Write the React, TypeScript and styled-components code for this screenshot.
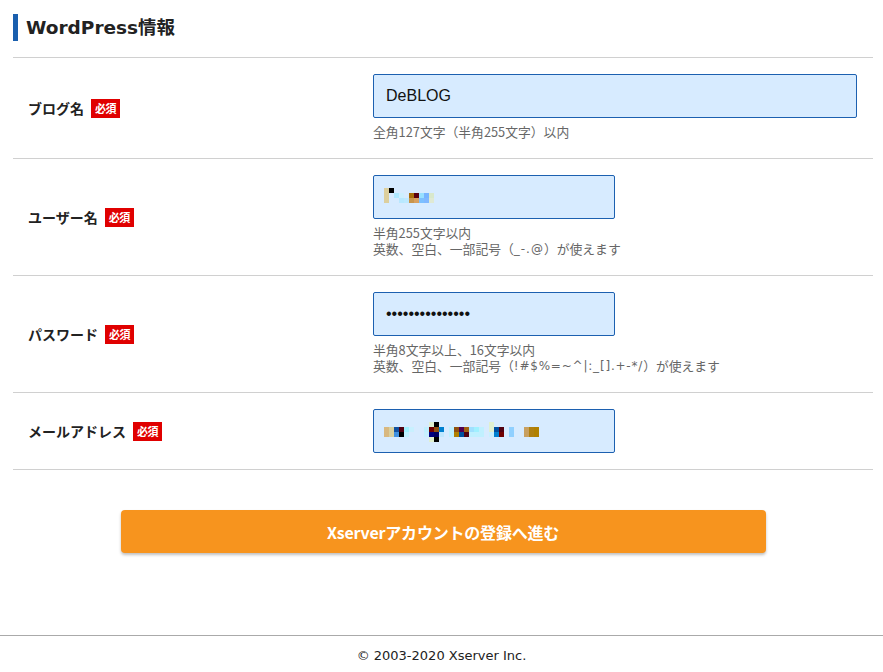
import React from "react";
import styled, { createGlobalStyle, css } from "styled-components";

const Global = createGlobalStyle`
  html, body { margin: 0; padding: 0; background: #fff; }
  body { font-family: "Noto Sans CJK JP", "Noto Sans", sans-serif; color: #222; }
`;

const Page = styled.div`
  display: flex;
  flex-direction: column;
  min-height: 672px;
`;

const Container = styled.div`
  width: 860px;
  margin-left: 13px;
  flex: 1;
`;

const Heading = styled.h2`
  margin: 14px 0 16px;
  border-left: 5px solid #1a5fae;
  padding-left: 8px;
  height: 27px;
  line-height: 27px;
  font-family: "DejaVu Sans", "Noto Sans CJK JP", sans-serif;
  font-weight: bold;
  font-size: 18.5px;
  color: #222;
`;

const Table = styled.div`
  border-top: 1px solid #d0d0d0;
`;

const Row = styled.div`
  display: grid;
  grid-template-columns: 360px 1fr;
  border-bottom: 1px solid #d0d0d0;
`;

const LabelCell = styled.div`
  display: flex;
  align-items: center;
  gap: 7px;
  padding-left: 15px;
`;

const Label = styled.span`
  font-size: 14px;
  font-weight: bold;
  color: #222;
  line-height: 20px;
`;

const Badge = styled.span`
  display: inline-flex;
  align-items: center;
  justify-content: center;
  width: 29px;
  height: 19px;
  background: #e00000;
  color: #fff;
  font-size: 11px;
  font-weight: bold;
  letter-spacing: -0.5px;
`;

const FieldCell = styled.div`
  padding: 16px 16px 16px 0;
`;

const boxStyle = css<{ $wide?: boolean }>`
  box-sizing: border-box;
  display: block;
  width: ${(p) => (p.$wide ? "484px" : "242px")};
  height: 44px;
  border: 1px solid #1c60b0;
  border-radius: 2px;
  background: #d7ebff;
  padding: 0 12px;
  font-family: "Liberation Sans", Arial, sans-serif;
  font-size: 16px;
  color: #111;
  outline: none;
`;

const TextInput = styled.input<{ $wide?: boolean }>`
  ${boxStyle}
`;

const MosaicBox = styled.div<{ $wide?: boolean }>`
  ${boxStyle}
  position: relative;
  padding: 0;
`;

const MosaicSvg = styled.svg`
  position: absolute;
  left: 0;
  top: 0;
  display: block;
`;

const Hint = styled.div`
  margin: 6px 0 2px;
  display: flex;
  flex-direction: column;
`;

const HintLine = styled.div`
  height: 16px;
  display: flex;
  align-items: center;
  font-size: 12.8px;
  line-height: 16px;
  color: #666;
  white-space: nowrap;
`;

const Symbols = styled.span`
  font-family: "DejaVu Sans", sans-serif;
  font-size: 12px;
  letter-spacing: ${(p: { $spacing: number }) => p.$spacing}px;
`;

const ButtonWrap = styled.div`
  display: flex;
  justify-content: center;
  padding: 40px 0 0;
`;

const SubmitButton = styled.button`
  width: 645px;
  height: 43px;
  border: none;
  border-radius: 4px;
  background: #f7941e;
  color: #fff;
  font-family: "Noto Sans CJK JP", sans-serif;
  font-weight: bold;
  font-size: 16px;
  letter-spacing: -0.2px;
  box-shadow: 0 2px 3px rgba(0, 0, 0, 0.25);
  cursor: pointer;
`;

const Footer = styled.footer`
  border-top: 1px solid #aaa;
  height: 37px;
  display: flex;
  align-items: center;
  justify-content: center;
  font-family: "DejaVu Sans", Verdana, sans-serif;
  font-size: 13px;
  color: #222;
  padding-top: 3px;
  box-sizing: border-box;
  margin-top: 80px;
`;

type Cell = [number, number, string];

const userCells: Cell[] = [
  [0, 0, "#dccf9e"], [0, 1, "#dccf9e"], [0, 2, "#dccf9e"],
  [1, 0, "#000000"],
  [2, 1, "#aee8ff"],
  [3, 1, "#cdefff"], [3, 2, "#b8e8ff"],
  [4, 2, "#bde9ff"],
  [5, 1, "#a8700c"], [5, 2, "#c8954c"],
  [6, 1, "#5a0010"], [6, 2, "#d8a060"],
  [7, 1, "#98e0ff"], [7, 2, "#7cc0ff"],
  [8, 1, "#78b4ff"], [8, 2, "#80b8ff"],
  [9, 1, "#d8e8cc"], [9, 2, "#dfe9d4"],
];

const mailCells: Cell[] = [
  [0, 1, "#d8b880"], [0, 2, "#d8b880"],
  [1, 1, "#d8d0a0"], [1, 2, "#d8d0a0"],
  [2, 1, "#1050a0"], [2, 2, "#4090e0"],
  [3, 1, "#500010"], [3, 2, "#000000"],
  [4, 1, "#a0f0ff"], [4, 2, "#c0f0ff"],
  [5, 1, "#c8f0ff"],
  [8, 1, "#c0f0ff"], [8, 2, "#c8f0ff"],
  [9, 0, "#e0f0d0"], [9, 1, "#700000"], [9, 2, "#000080"], [9, 3, "#e0f0d0"],
  [10, 0, "#000000"], [10, 1, "#905010"], [10, 2, "#000060"], [10, 3, "#000000"],
  [11, 1, "#0080d0"], [11, 2, "#c0e8ff"],
  [13, 1, "#c0f0ff"], [13, 2, "#c0f0ff"],
  [14, 1, "#905010"], [14, 2, "#b08000"],
  [15, 1, "#500050"], [15, 2, "#0050a0"],
  [16, 1, "#a06010"], [16, 2, "#500010"],
  [17, 1, "#a0e0ff"], [17, 2, "#c0f0ff"],
  [18, 1, "#a0f0ff"], [18, 2, "#c0f0ff"],
  [19, 1, "#c0f0ff"], [19, 2, "#c0f0ff"],
  [21, 0, "#e0f0d0"], [21, 1, "#e0f0d0"], [21, 2, "#c8f0ff"],
  [22, 1, "#0050a0"], [22, 2, "#0080d0"],
  [23, 1, "#500010"], [23, 2, "#700000"],
  [25, 1, "#90d0ff"], [25, 2, "#90d0ff"],
  [28, 1, "#c8a060"], [28, 2, "#c8a060"],
  [29, 1, "#b08010"], [29, 2, "#b08010"],
  [30, 1, "#b08000"], [30, 2, "#b08000"],
];

const Mosaic: React.FC<{ cells: Cell[]; x: number; y: number }> = ({ cells, x, y }) => (
  <MosaicSvg width="240" height="42" viewBox="0 0 240 42">
    {cells.map(([c, r, col], i) => (
      <rect key={i} x={x + c * 5} y={y + r * 5} width="5" height="5" fill={col} />
    ))}
  </MosaicSvg>
);

export default function App() {
  return (
    <Page>
      <Global />
      <Container>
        <Heading>WordPress情報</Heading>
        <Table>
          <Row>
            <LabelCell>
              <Label>ブログ名</Label>
              <Badge>必須</Badge>
            </LabelCell>
            <FieldCell>
              <TextInput $wide readOnly value="DeBLOG" />
              <Hint>
                <HintLine>全角127文字（半角255文字）以内</HintLine>
              </Hint>
            </FieldCell>
          </Row>
          <Row>
            <LabelCell>
              <Label>ユーザー名</Label>
              <Badge>必須</Badge>
            </LabelCell>
            <FieldCell>
              <MosaicBox>
                <Mosaic cells={userCells} x={10} y={12} />
              </MosaicBox>
              <Hint>
                <HintLine>半角255文字以内</HintLine>
                <HintLine>
                  英数、空白、一部記号（<Symbols $spacing={1}>_-.@</Symbols>）が使えます
                </HintLine>
              </Hint>
            </FieldCell>
          </Row>
          <Row>
            <LabelCell>
              <Label>パスワード</Label>
              <Badge>必須</Badge>
            </LabelCell>
            <FieldCell>
              <TextInput type="password" readOnly value="abcdefghijklmno" />
              <Hint>
                <HintLine>半角8文字以上、16文字以内</HintLine>
                <HintLine>
                  英数、空白、一部記号（<Symbols $spacing={0.8}>!#$%=~^|:_[].+-*/</Symbols>）が使えます
                </HintLine>
              </Hint>
            </FieldCell>
          </Row>
          <Row>
            <LabelCell>
              <Label>メールアドレス</Label>
              <Badge>必須</Badge>
            </LabelCell>
            <FieldCell>
              <MosaicBox>
                <Mosaic cells={mailCells} x={10} y={12} />
              </MosaicBox>
            </FieldCell>
          </Row>
        </Table>
        <ButtonWrap>
          <SubmitButton type="button">Xserverアカウントの登録へ進む</SubmitButton>
        </ButtonWrap>
      </Container>
      <Footer>© 2003-2020 Xserver Inc.</Footer>
    </Page>
  );
}
